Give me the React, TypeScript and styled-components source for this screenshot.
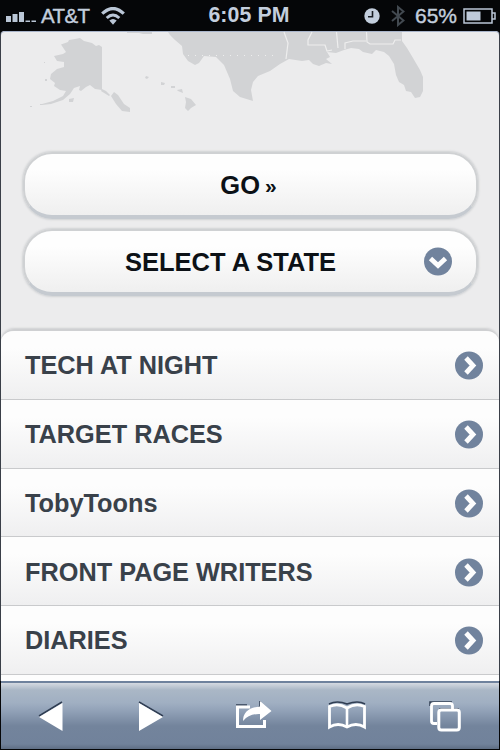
import React from "react";
import styled, { createGlobalStyle } from "styled-components";

const GlobalStyle = createGlobalStyle`
  * { box-sizing: border-box; }
  body { margin: 0; background: #050608; font-family: "Liberation Sans", Arial, sans-serif; }
`;

const Phone = styled.div`
  width: 500px;
  height: 750px;
  display: flex;
  flex-direction: column;
  overflow: hidden;
  background: #050608;
`;

const StatusBar = styled.header`
  height: 31px;
  flex: none;
  display: grid;
  grid-template-columns: 1fr auto 1fr;
  align-items: center;
  padding: 0 4px 0 6px;
  color: #c3cedd;
  font-size: 20px;
  line-height: 31px;
  white-space: nowrap;
`;

const StatusGroup = styled.div<{ $end?: boolean }>`
  display: flex;
  align-items: center;
  justify-content: ${(p) => (p.$end ? "flex-end" : "flex-start")};
  svg { display: block; flex: none; }
`;

const Carrier = styled.span`
  margin: 0 12px 0 5px;
  font-size: 20.5px;
  letter-spacing: -0.6px;
  -webkit-text-stroke: 0.4px #c3cedd;
`;

const Clock = styled.span`
  margin-right: 4px;
  font-weight: bold;
  font-size: 21.3px;
  letter-spacing: 0.1px;
`;

const Percent = styled.span`
  margin: 0 6px 0 10px;
  font-size: 21px;
  -webkit-text-stroke: 0.4px #c3cedd;
`;

const StatusGap = styled.span`
  width: 11px;
`;

const Page = styled.main`
  height: 650px;
  flex: none;
  margin: 0 1px;
  overflow: hidden;
  display: flex;
  flex-direction: column;
  background: #ececed;
  border-radius: 4px 4px 0 0;
  box-shadow: -1px 0 #3a3f48, 1px 0 #3a3f48, inset 0 1px #a9b5cb;
`;

const MapArt = styled.svg`
  display: block;
  width: 498px;
  height: 90px;
  flex: none;
`;

const Actions = styled.div`
  display: flex;
  flex-direction: column;
  gap: 10px;
  padding: 31px 21px 0 22px;
  flex: none;
`;

const PillButton = styled.button<{ $icon?: boolean }>`
  height: 67px;
  display: flex;
  align-items: center;
  justify-content: center;
  gap: 5px;
  position: relative;
  padding: 2px ${(p) => (p.$icon ? 51 : 4)}px 0 ${(p) => (p.$icon ? 11 : 0)}px;
  border: 2px solid #cfd1d3;
  border-bottom: 4px solid #c5cad0;
  border-radius: 29px;
  background: linear-gradient(#fefefe 25%, #efefef);
  box-shadow: 0 0 2px 1px #d0d2d4;
  color: #0c1116;
  font: bold 25.5px "Liberation Sans", Arial, sans-serif;
  white-space: nowrap;
`;

const PillIcon = styled.span`
  position: absolute;
  right: 24px;
  top: 16px;
  display: flex;
`;

const Guillemet = styled.span`
  font-size: 21px;
  padding-top: 1px;
`;

const Menu = styled.nav`
  margin-top: 33px;
  flex: none;
  border-top: 2px solid #cfd0d2;
  border-radius: 13px 13px 0 0;
  box-shadow: 0 -1px 2px #cfd0d2;
  overflow: hidden;
`;

const MenuRow = styled.a`
  height: 68.75px;
  display: flex;
  align-items: center;
  justify-content: space-between;
  padding: 2px 16px 0 24px;
  border-bottom: 1.5px solid #c9cacc;
  background: linear-gradient(#fdfdfd 25%, #efeff0);
  color: #39414a;
  font-size: 25.3px;
  font-weight: bold;
  text-decoration: none;
  white-space: nowrap;
  svg { display: block; }
`;

const Toolbar = styled.footer`
  height: 68px;
  flex: none;
  margin: 0 1px;
  border-top: 2px solid #6f829d;
  background: linear-gradient(#d5dae1 0px, #aab7c6 7px, #a0afc2 20px, #91a1b7 28px, #73849c 43px, #71829b 61px, #5f6e84 66px);
  svg { display: block; width: 498px; height: 66px; }
`;

const Disc = ({ down = false }: { down?: boolean }) => (
  <svg width="28" height="29" viewBox="-14 -14.5 28 29">
    <circle r="14" fill="#71839d" />
    <path
      d={down ? "M-7.500-3L0 4L7.500-3" : "M-3-7.500L4 0L-3 7.500"}
      fill="none"
      stroke="#fdfdfd"
      strokeWidth="4.800"
    />
  </svg>
);

const Signal = () => (
  <svg width="30" height="12" viewBox="0 0 30 12" fill="#bac6d6">
    <path d="M0 6h5v6H0zM6.500 4h5v8h-5zM13 2h5v10h-5zM19.500 10.500h4.500v1.500h-4.500zM25.500 10.500h4.500v1.500h-4.500z" />
  </svg>
);

const Wifi = () => (
  <svg width="24" height="18" viewBox="0 0 24 18" fill="none" stroke="#bac6d6">
    <path d="M1.200 6.700Q12-3.700 22.800 6.700" strokeWidth="3.200" />
    <path d="M5.700 11Q12 5 18.300 11" strokeWidth="3" />
    <path d="M8.300 13.500Q12 10.300 15.700 13.500L12 17.700Z" fill="#bac6d6" stroke="none" />
  </svg>
);

const Alarm = () => (
  <svg width="16" height="16" viewBox="0 0 16 16">
    <circle cx="8" cy="8" r="7.700" fill="#c3cedd" />
    <path d="M8.500 3V8.800H4" fill="none" stroke="#171b22" strokeWidth="1.600" />
  </svg>
);

const Bluetooth = () => (
  <svg width="14" height="22" viewBox="0 0 14 22" fill="none" stroke="#424950" strokeWidth="2">
    <path d="M1 6L12.500 15.500L7 20V2L12.500 6.500L1 16" />
  </svg>
);

const Battery = () => (
  <svg width="33" height="16" viewBox="0 0 33 16">
    <path d="M1 1H29V15H1ZM29 5H32V11H29" fill="none" stroke="#bac6d6" strokeWidth="1.500" />
    <path d="M3.500 3.500H17.500V12.500H3.500Z" fill="#bfcada" />
  </svg>
);

const CoastMap = () => (
  <MapArt viewBox="1 31 498 90">
    <g fill="#d2d3d5">
      <path d="M61 44.500L68 42L69 40L75 39L80 38L84 41L92 43L96 46L99 45L102 47V90L95 89L90 85L86 87L81 91L79 90L80 86L74 88L70 94L63 100L51 104L42 105V104L53 101L63 96L66 91L60 90L54 86L55 83L50 79L51 74L57 69L64 67L64 62L57 61L54 56L63 54L66 52Z" />
      <path d="M102 89L106 91L110 95L109 96L101 91ZM111 96L114 92L118 95L124 104L130 108V112L122 111L116 104ZM69 99L74 98L73 102H69ZM40 104H42V105H40ZM30 106h2v1h-2zM45 79h2v2h-2zM44 62h1v1h-1z" />
      <path d="M146 76L149 77L147 79L145 78ZM161 82L165 83L164 85H161ZM171 86H175V88H171ZM177 90L182 89L183 93L178 91ZM185 97L191 99L196 105L191 108L188 111L185 108L186 102Z" />
      <path d="M127 32H152V34H143L139 33H127Z" />
      <path d="M168 32H402V41L407 48L413 58L420 70L423 77V91L420 97L415 98L411 92L406 91L404 85L399 82L396 75L394 64L389 56L384 52L376 50L372 54L363 52L359 49L351 48L344 50L336 53L327 52L330 57L326 59L332 64L326 63L319 66L313 64L309 60L302 61L289 59L280 64L270 71L258 76L253 82L251 90L253 101L240 97L233 91L230 79L224 65L216 57L204 56L199 63L195 65L188 61L183 54L182 46L175 40L170 35Z" />
    </g>
    <g fill="none" stroke="#eeeeee" strokeWidth="1.200">
      <path d="M284 32L288 43L286 59M312 32L308 40V45H325L327 51L332 50M336.500 32L338 48M366.500 32L367 42L370 44H393L395 40H401M345 49V43L353 41H366" />
      <path d="M188 55.500H277" strokeDasharray="1 6" />
    </g>
  </MapArt>
);

const ToolbarIcons = () => (
  <svg viewBox="1 683 498 66" fill="none">
    <g stroke="#303e53" strokeWidth="1.500">
      <path d="M39 716L62 702M139 702L163 716M236 705H247M253 713Q258 707 260 707V701M329 704Q337 700 347 704Q358 700 365 704M430 706V702H452M439 709H459" />
    </g>
    <path d="M39 717L62.500 703V731ZM139 703L163 717L139 731Z" fill="#fff" />
    <path d="M250 707H237.500V726.500H264.500V720" stroke="#fff" strokeWidth="3" />
    <path d="M243 721Q243 708 260 706.500V701L271.500 711L260 720V714Q249 713.500 243 721Z" fill="#fff" />
    <path d="M347 708Q338 702.500 329.500 706.500V727Q338 722 347 727Q356 722 364.500 727V706.500Q356 702.500 347 708Z" stroke="#fff" strokeWidth="2.800" />
    <path d="M347 708V727" stroke="#fff" strokeWidth="2.600" />
    <path d="M437 723.500H434Q431.500 723.500 431.500 721V706Q431.500 703.500 434 703.500H450Q452.500 703.500 452.500 706V709" stroke="#fff" strokeWidth="2.800" />
    <rect x="438.800" y="710" width="20.500" height="20" rx="2.500" stroke="#fff" strokeWidth="3" />
  </svg>
);

const categories = [
  "TECH AT NIGHT",
  "TARGET RACES",
  "TobyToons",
  "FRONT PAGE WRITERS",
  "DIARIES",
];

export default function App() {
  return (
    <>
      <GlobalStyle />
      <Phone>
        <StatusBar>
          <StatusGroup>
            <Signal />
            <Carrier>AT&amp;T</Carrier>
            <Wifi />
          </StatusGroup>
          <Clock>6:05 PM</Clock>
          <StatusGroup $end>
            <Alarm />
            <StatusGap />
            <Bluetooth />
            <Percent>65%</Percent>
            <Battery />
          </StatusGroup>
        </StatusBar>
        <Page>
          <CoastMap />
          <Actions>
            <PillButton>
              <span>GO</span>
              <Guillemet>»</Guillemet>
            </PillButton>
            <PillButton $icon>
              SELECT A STATE
              <PillIcon><Disc down /></PillIcon>
            </PillButton>
          </Actions>
          <Menu>
            {categories.map((name) => (
              <MenuRow key={name}>
                {name}
                <Disc />
              </MenuRow>
            ))}
            <MenuRow />
          </Menu>
        </Page>
        <Toolbar>
          <ToolbarIcons />
        </Toolbar>
      </Phone>
    </>
  );
}
